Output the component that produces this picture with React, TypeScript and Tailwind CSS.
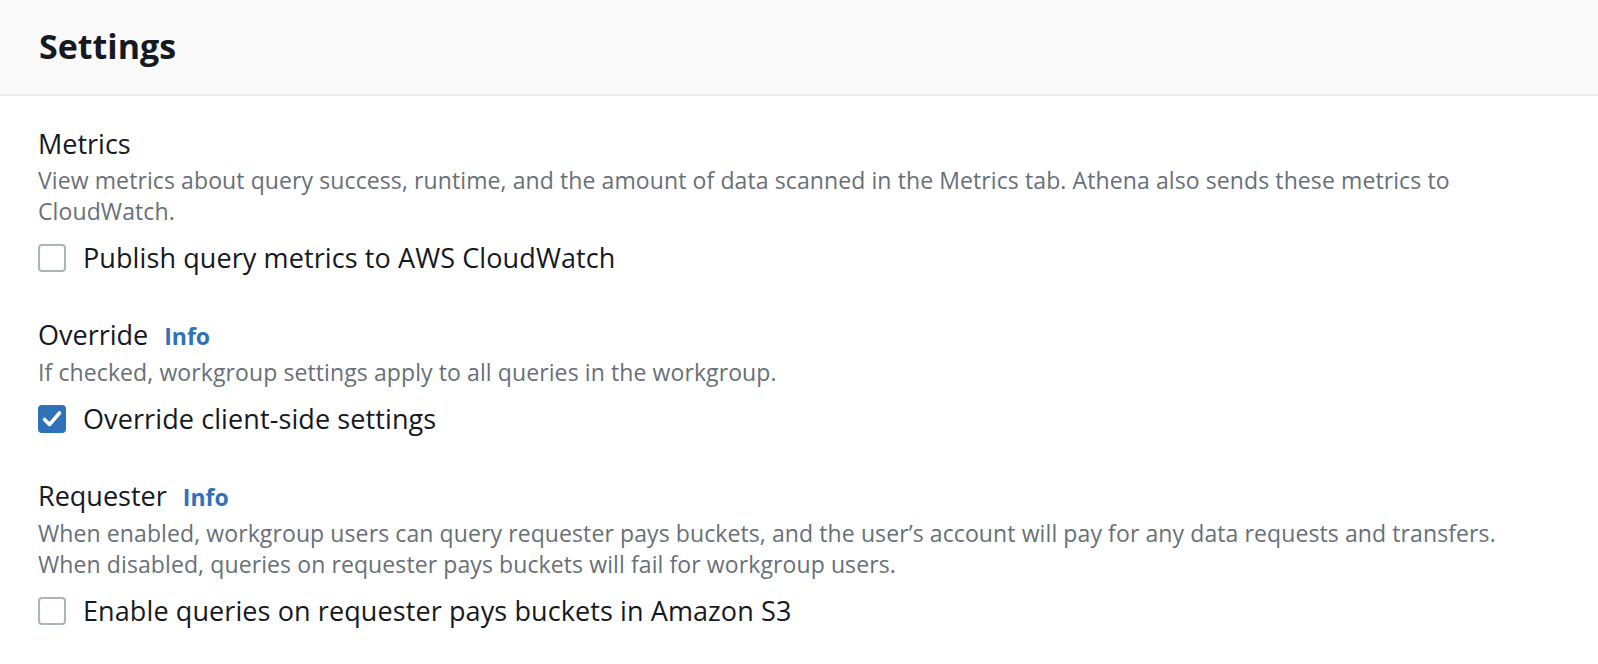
import React from "react";

function Box({ checked }: { checked?: boolean }) {
  if (checked) {
    return (
      <span className="block h-[28px] w-[28px] shrink-0 rounded-[4px] bg-[#2f72ba]">
        <svg width="28" height="28" viewBox="0 0 28 28" fill="none">
          <path d="M6.5 14.5l5 5L21.5 8" stroke="#fff" strokeWidth="3.6" strokeLinecap="round" strokeLinejoin="round" />
        </svg>
      </span>
    );
  }
  return <span className="block h-[28px] w-[28px] shrink-0 rounded-[4px] border-2 border-[#aab7b8] bg-white" />;
}

function Section({
  title,
  info,
  desc,
  label,
  checked,
}: {
  title: string;
  info?: boolean;
  desc: React.ReactNode;
  label: string;
  checked?: boolean;
}) {
  return (
    <div className="flex flex-col">
      <div className="flex items-baseline gap-[16px] text-[27px] leading-[32px] text-[#16191f]">
        <span>{title}</span>
        {info && <span className="text-[23px] font-bold text-[#2f72ba]">Info</span>}
      </div>
      <div className="mt-[5px] text-[23px] leading-[31px] tracking-[0.1px] text-[#687078]">{desc}</div>
      <label className="mt-[15px] flex items-center gap-[17px] text-[27px] leading-[32px] tracking-[0.1px] text-[#16191f]">
        <Box checked={checked} />
        <span>{label}</span>
      </label>
    </div>
  );
}

export default function App() {
  return (
    <div className="min-h-[664px] w-full bg-white" style={{ fontFamily: '"Open Sans", sans-serif' }}>
      <div className="flex h-[96px] items-center border-b-2 border-[#eaeded] bg-[#fafafa] pl-[39px]">
        <h2 className="pb-[2px] text-[34px] font-bold leading-[40px] text-[#16191f]">Settings</h2>
      </div>
      <div className="flex flex-col gap-[45px] pl-[38px] pr-[38px] pt-[32px]">
        <Section
          title="Metrics"
          desc={
            <>
              View metrics about query success, runtime, and the amount of data scanned in the Metrics tab. Athena also sends these metrics to
              <br />
              CloudWatch.
            </>
          }
          label="Publish query metrics to AWS CloudWatch"
        />
        <Section
          title="Override"
          info
          desc="If checked, workgroup settings apply to all queries in the workgroup."
          label="Override client-side settings"
          checked
        />
        <Section
          title="Requester"
          info
          desc={
            <>
              When enabled, workgroup users can query requester pays buckets, and the user’s account will pay for any data requests and transfers.
              <br />
              When disabled, queries on requester pays buckets will fail for workgroup users.
            </>
          }
          label="Enable queries on requester pays buckets in Amazon S3"
        />
      </div>
    </div>
  );
}
